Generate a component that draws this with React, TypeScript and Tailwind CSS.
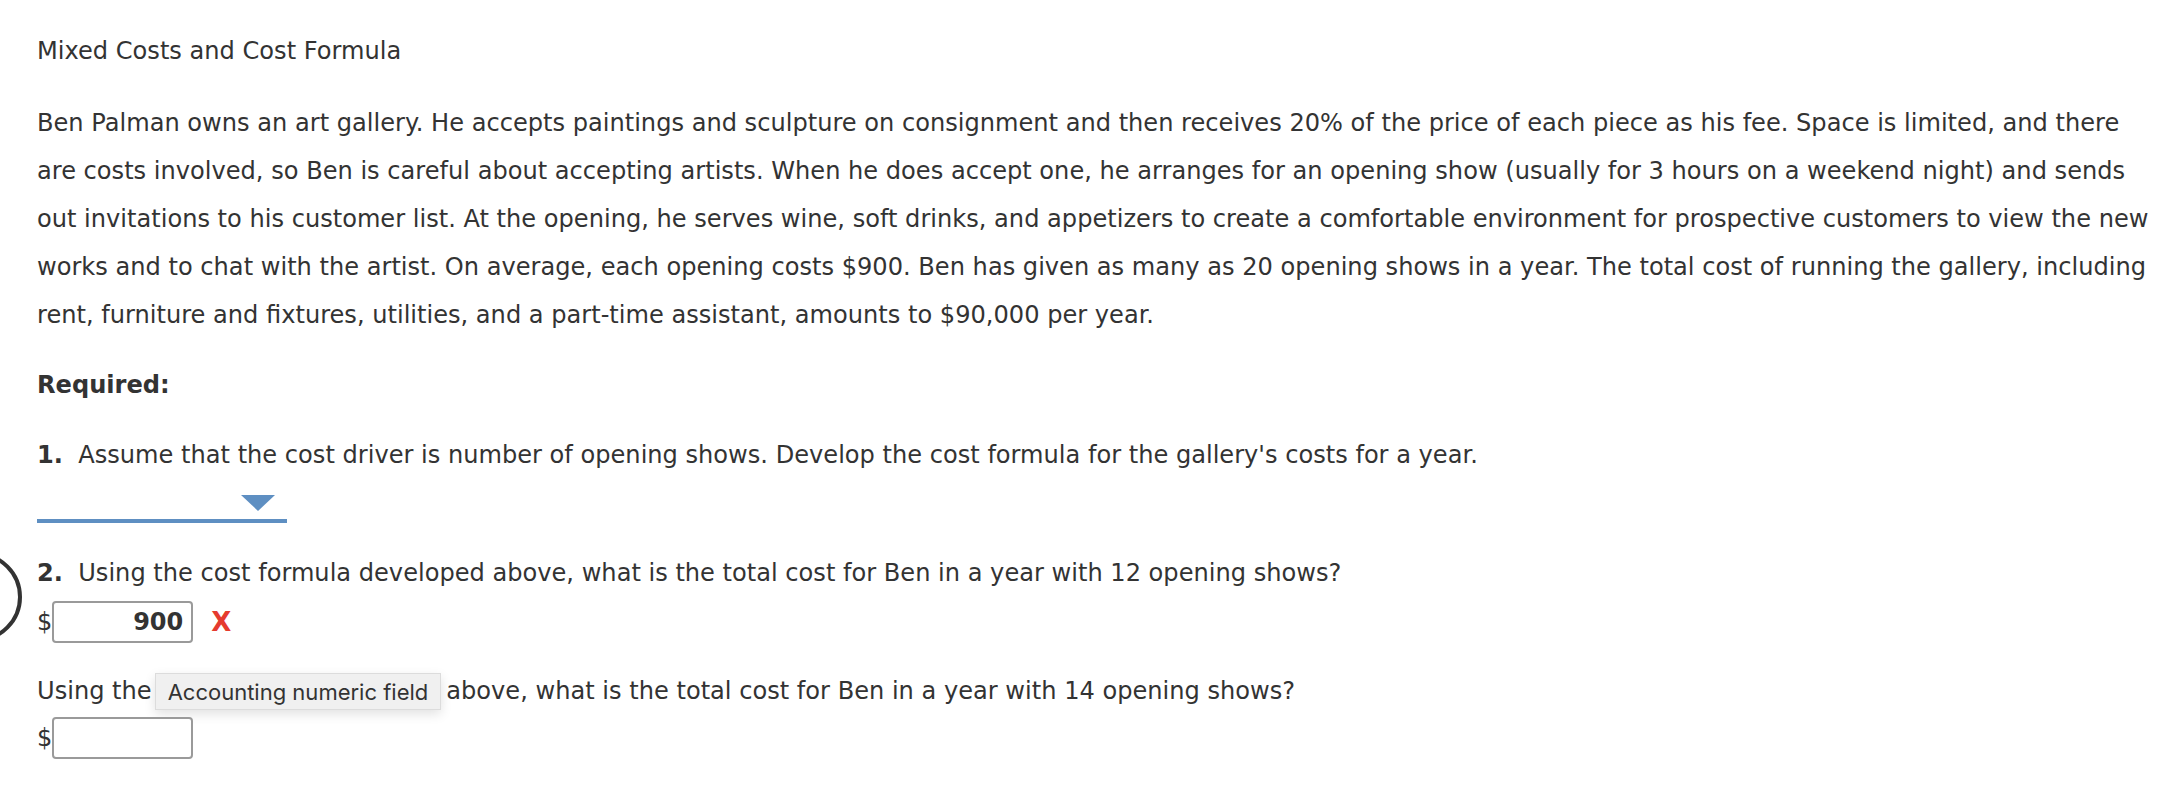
import React from "react";

const body = "text-[#333333] text-[24.1px] leading-[48px]";

function AmountInput({ value }: { value?: string }) {
  return (
    <div className="flex items-center">
      <span className="text-[24px] text-[#333333]">$</span>
      <div className="w-[141px] h-[42px] rounded-[4px] border-2 border-[#9a9a9a] bg-white flex items-center justify-end px-2">
        <span className="text-[24px] font-bold text-[#333333]">{value}</span>
      </div>
    </div>
  );
}

export default function App() {
  return (
    <div
      className="relative w-[2173px] h-[785px] bg-white overflow-hidden pl-[37px] pt-[27px]"
      style={{ fontFamily: '"DejaVu Sans", Verdana, sans-serif' }}
    >
      {/* partially visible circle on left edge */}
      <div className="absolute left-[-78px] top-[552px] w-[100px] h-[90px] rounded-full border-[4px] border-[#333333]" />

      <h1 className={`${body} font-normal`}>Mixed Costs and Cost Formula</h1>

      <p className={`${body} mt-[24px] whitespace-nowrap`}>
        Ben Palman owns an art gallery. He accepts paintings and sculpture on consignment and then receives 20% of the
        price of each piece as his fee. Space is limited, and there
        <br />
        are costs involved, so Ben is careful about accepting artists. When he does accept one, he arranges for an
        opening show (usually for 3 hours on a weekend night) and sends
        <br />
        out invitations to his customer list. At the opening, he serves wine, soft drinks, and appetizers to create a
        comfortable environment for prospective customers to view the new
        <br />
        works and to chat with the artist. On average, each opening costs $900. Ben has given as many as 20 opening
        shows in a year. The total cost of running the gallery, including
        <br />
        rent, furniture and fixtures, utilities, and a part-time assistant, amounts to $90,000 per year.
      </p>

      <p className={`${body} font-bold mt-[22px]`}>Required:</p>

      <p className={`${body} mt-[22px]`}>
        <span className="font-bold">1.</span>&nbsp; Assume that the cost driver is number of opening shows. Develop
        the cost formula for the gallery's costs for a year.
      </p>

      <div className="w-[250px] h-[30px] border-b-[4px] border-[#5e8fc2] flex justify-end items-start pr-[12px] mt-[14px]">
        <svg width="34" height="16" viewBox="0 0 34 16" className="mt-[2px]">
          <polygon points="0,0 34,0 17,16" fill="#5e8fc2" />
        </svg>
      </div>

      <p className={`${body} mt-[26px]`}>
        <span className="font-bold">2.</span>&nbsp; Using the cost formula developed above, what is the total cost for
        Ben in a year with 12 opening shows?
      </p>

      <div className="flex items-center gap-[18px] mt-[4px]">
        <AmountInput value="900" />
        <span className="text-[#e53b2f] text-[26px] font-bold">X</span>
      </div>

      <div className={`${body} mt-[24px] flex items-center`}>
        <span>Using the</span>
        <span
          className="ml-[3px] mr-[5px] px-[12px] h-[37px] leading-[37px] bg-[#f0f0f0] border border-[#dcdcdc] text-[#333333] text-[22px] shadow-[0_4px_12px_rgba(0,0,0,0.12)]"
          style={{ fontFamily: '"Inter", "Roboto", sans-serif' }}
        >
          Accounting numeric field
        </span>
        <span>above, what is the total cost for Ben in a year with 14 opening shows?</span>
      </div>

      <div className="mt-[2px]">
        <AmountInput />
      </div>
    </div>
  );
}
